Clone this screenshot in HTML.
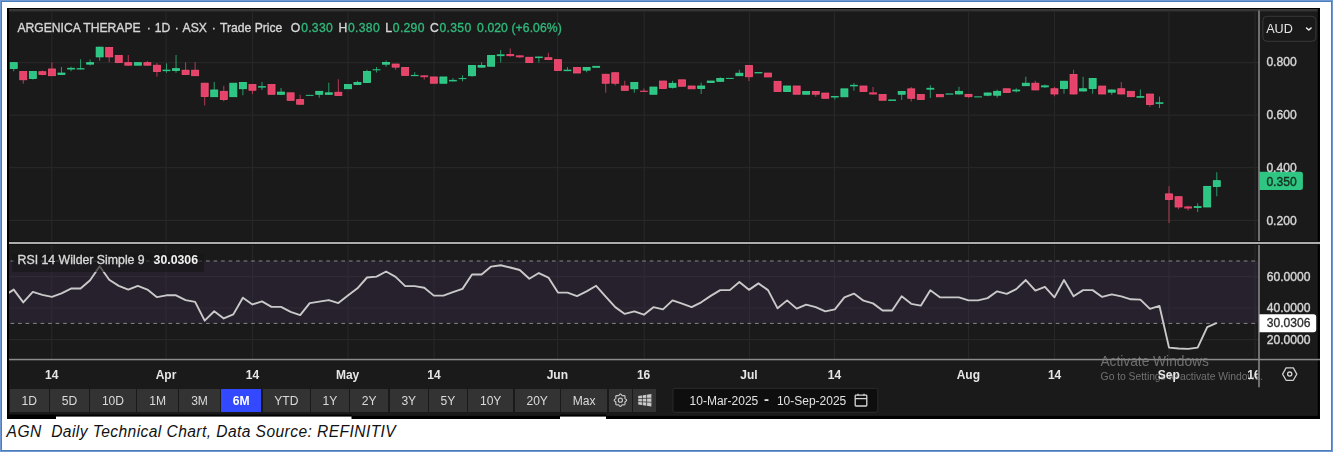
<!DOCTYPE html>
<html lang="en">
<head>
<meta charset="utf-8">
<title>AGN Daily Technical Chart</title>
<style>
html,body{margin:0;padding:0;background:#fff;}
body{width:1333px;height:452px;position:relative;overflow:hidden;font-family:"Liberation Sans",Arial,sans-serif;}
#frame{position:absolute;left:0;top:0;width:1331px;height:450px;border:1px solid #7099d1;box-sizing:content-box;}
#frame2{position:absolute;left:1px;top:1px;width:1329px;height:448px;border:1px solid #4a7ebd;}
#chart{position:absolute;left:7px;top:8px;width:1312.6px;height:410.6px;background:#1a1a1a;overflow:hidden;}
#chart svg{position:absolute;left:-7px;top:-8px;}
.t{position:absolute;white-space:nowrap;line-height:1;}
.hdr{font-size:12.15px;color:#d6d6d6;top:21.8px;-webkit-text-stroke:0.34px #d6d6d6;}
.hdr .g{color:#2fb97b;letter-spacing:0.3px;-webkit-text-stroke:0.34px #2fb97b;}
.ax{font-size:12.1px;font-weight:normal;color:#d6d6d6;-webkit-text-stroke:0.38px #d6d6d6;}
.tl{font-size:12px;font-weight:bold;color:#e6e6e6;top:368.9px;transform:translateX(-50%);}
.btn{position:absolute;top:388.6px;height:23.3px;background:#333333;color:#dadada;font-size:12.1px;line-height:24.9px;text-align:center;}
.btn.on{background:#3349ff;color:#fff;font-weight:bold;}
#cap{position:absolute;left:6.6px;top:423.8px;letter-spacing:0.42px;font-family:"Liberation Sans",sans-serif;font-style:italic;font-size:15.6px;color:#111;white-space:nowrap;line-height:1;transform-origin:0 0;}
</style>
</head>
<body>
<div id="frame"></div><div id="frame2"></div>
<div id="chart">
<svg width="1333" height="452" viewBox="0 0 1333 452">
<defs><linearGradient id="tg" x1="0" y1="0" x2="0" y2="1"><stop offset="0" stop-color="#000"/><stop offset="0.27" stop-color="#000"/><stop offset="0.33" stop-color="#3d3d3d"/><stop offset="0.72" stop-color="#333333"/><stop offset="1" stop-color="#1a1a1a"/></linearGradient></defs>
<g stroke="#272727" stroke-width="1.2" shape-rendering="auto">
<line x1="51.8" y1="10" x2="51.8" y2="359.5"/>
<line x1="166.1" y1="10" x2="166.1" y2="359.5"/>
<line x1="252.6" y1="10" x2="252.6" y2="359.5"/>
<line x1="347.9" y1="10" x2="347.9" y2="359.5"/>
<line x1="434.1" y1="10" x2="434.1" y2="359.5"/>
<line x1="557.6" y1="10" x2="557.6" y2="359.5"/>
<line x1="644.2" y1="10" x2="644.2" y2="359.5"/>
<line x1="749.5" y1="10" x2="749.5" y2="359.5"/>
<line x1="834.4" y1="10" x2="834.4" y2="359.5"/>
<line x1="968.6" y1="10" x2="968.6" y2="359.5"/>
<line x1="1054.5" y1="10" x2="1054.5" y2="359.5"/>
<line x1="1169" y1="10" x2="1169" y2="359.5"/>
<line x1="1255" y1="10" x2="1255" y2="359.5"/>
<line x1="9" y1="62.6" x2="1258.5" y2="62.6"/>
<line x1="9" y1="115.1" x2="1258.5" y2="115.1"/>
<line x1="9" y1="167.6" x2="1258.5" y2="167.6"/>
<line x1="9" y1="220.3" x2="1258.5" y2="220.3"/>
<line x1="9" y1="276.7" x2="1258.5" y2="276.7"/>
<line x1="9" y1="308" x2="1258.5" y2="308"/>
<line x1="9" y1="339.6" x2="1258.5" y2="339.6"/>
</g>
<rect x="9" y="260.8" width="1249.5" height="62.6" fill="#423156" fill-opacity="0.30"/>
<g stroke="#b0b0b0" stroke-width="1" stroke-dasharray="3.7 3.82" stroke-opacity="0.72">
<line x1="10.5" y1="261" x2="1258.5" y2="261"/><line x1="10.5" y1="323.4" x2="1258.5" y2="323.4"/></g>
<g stroke-width="1.05" stroke-opacity="0.72"><line x1="13.72" y1="62.27" x2="13.72" y2="71.15" stroke="#2cc583"/><line x1="23.27" y1="71.15" x2="23.27" y2="83.64" stroke="#e7436a"/><line x1="32.82" y1="71.15" x2="32.82" y2="79.43" stroke="#2cc583"/><line x1="42.36" y1="70.55" x2="42.36" y2="75.36" stroke="#e7436a"/><line x1="51.91" y1="62.27" x2="51.91" y2="76.12" stroke="#e7436a"/><line x1="61.46" y1="67.09" x2="61.46" y2="74.91" stroke="#2cc583"/><line x1="71.01" y1="66.79" x2="71.01" y2="71.3" stroke="#2cc583"/><line x1="80.56" y1="59.26" x2="80.56" y2="69.5" stroke="#2cc583"/><line x1="90.1" y1="59.56" x2="90.1" y2="65.58" stroke="#2cc583"/><line x1="99.65" y1="46.77" x2="99.65" y2="60.77" stroke="#2cc583"/><line x1="109.2" y1="47.07" x2="109.2" y2="62.27" stroke="#e7436a"/><line x1="128.3" y1="55.05" x2="128.3" y2="65.58" stroke="#e7436a"/><line x1="147.39" y1="61.07" x2="147.39" y2="65.58" stroke="#e7436a"/><line x1="156.94" y1="63.02" x2="156.94" y2="76.87" stroke="#e7436a"/><line x1="166.49" y1="63.33" x2="166.49" y2="72.81" stroke="#2cc583"/><line x1="176.04" y1="55.05" x2="176.04" y2="72.81" stroke="#2cc583"/><line x1="185.58" y1="62.27" x2="185.58" y2="74.91" stroke="#e7436a"/><line x1="195.13" y1="62.27" x2="195.13" y2="76.12" stroke="#e7436a"/><line x1="204.68" y1="82.81" x2="204.68" y2="105.38" stroke="#e7436a"/><line x1="214.23" y1="82.05" x2="214.23" y2="97.1" stroke="#2cc583"/><line x1="223.78" y1="85.67" x2="223.78" y2="101.17" stroke="#e7436a"/><line x1="242.87" y1="82.05" x2="242.87" y2="95.15" stroke="#2cc583"/><line x1="252.42" y1="84.16" x2="252.42" y2="93.94" stroke="#e7436a"/><line x1="261.97" y1="82.05" x2="261.97" y2="89.88" stroke="#2cc583"/><line x1="281.06" y1="88.07" x2="281.06" y2="94.7" stroke="#2cc583"/><line x1="300.16" y1="94.85" x2="300.16" y2="104.63" stroke="#e7436a"/><line x1="319.26" y1="90.93" x2="319.26" y2="97.86" stroke="#2cc583"/><line x1="328.8" y1="82.81" x2="328.8" y2="94.7" stroke="#2cc583"/><line x1="338.35" y1="79.35" x2="338.35" y2="95.9" stroke="#e7436a"/><line x1="357.45" y1="80.85" x2="357.45" y2="84.91" stroke="#2cc583"/><line x1="367" y1="69.86" x2="367" y2="82.81" stroke="#2cc583"/><line x1="376.54" y1="67.01" x2="376.54" y2="72.57" stroke="#2cc583"/><line x1="386.09" y1="60.53" x2="386.09" y2="66.85" stroke="#2cc583"/><line x1="395.64" y1="63.63" x2="395.64" y2="69.65" stroke="#e7436a"/><line x1="414.74" y1="72.36" x2="414.74" y2="76.12" stroke="#2cc583"/><line x1="424.28" y1="75.36" x2="424.28" y2="79.43" stroke="#e7436a"/><line x1="452.93" y1="78.07" x2="452.93" y2="81.38" stroke="#2cc583"/><line x1="462.48" y1="75.36" x2="462.48" y2="81.38" stroke="#2cc583"/><line x1="472.02" y1="65.13" x2="472.02" y2="76.87" stroke="#2cc583"/><line x1="481.57" y1="62.27" x2="481.57" y2="67.54" stroke="#2cc583"/><line x1="500.67" y1="50.08" x2="500.67" y2="62.57" stroke="#2cc583"/><line x1="510.22" y1="48.58" x2="510.22" y2="56.85" stroke="#e7436a"/><line x1="519.76" y1="55.35" x2="519.76" y2="58.06" stroke="#e7436a"/><line x1="538.86" y1="56.55" x2="538.86" y2="62.57" stroke="#2cc583"/><line x1="548.41" y1="52.79" x2="548.41" y2="60.02" stroke="#e7436a"/><line x1="567.5" y1="67.09" x2="567.5" y2="71.15" stroke="#2cc583"/><line x1="586.6" y1="67.09" x2="586.6" y2="72.36" stroke="#2cc583"/><line x1="605.7" y1="73.86" x2="605.7" y2="92.67" stroke="#e7436a"/><line x1="615.24" y1="72.36" x2="615.24" y2="85.45" stroke="#e7436a"/><line x1="624.79" y1="80.63" x2="624.79" y2="90.71" stroke="#e7436a"/><line x1="634.34" y1="82.14" x2="634.34" y2="92.67" stroke="#2cc583"/><line x1="643.89" y1="88.46" x2="643.89" y2="91.92" stroke="#e7436a"/><line x1="672.53" y1="80.63" x2="672.53" y2="88.46" stroke="#2cc583"/><line x1="701.18" y1="82.59" x2="701.18" y2="93.88" stroke="#2cc583"/><line x1="720.27" y1="77.32" x2="720.27" y2="81.69" stroke="#2cc583"/><line x1="739.37" y1="69.8" x2="739.37" y2="76.12" stroke="#2cc583"/><line x1="748.92" y1="65.13" x2="748.92" y2="80.93" stroke="#e7436a"/><line x1="815.75" y1="91.17" x2="815.75" y2="96.73" stroke="#e7436a"/><line x1="834.85" y1="95.98" x2="834.85" y2="99.44" stroke="#2cc583"/><line x1="853.94" y1="82.89" x2="853.94" y2="90.87" stroke="#2cc583"/><line x1="873.04" y1="86.95" x2="873.04" y2="94.48" stroke="#e7436a"/><line x1="901.68" y1="91.17" x2="901.68" y2="99.89" stroke="#2cc583"/><line x1="911.23" y1="87.1" x2="911.23" y2="101.4" stroke="#e7436a"/><line x1="930.33" y1="85.15" x2="930.33" y2="97.94" stroke="#2cc583"/><line x1="958.97" y1="86.87" x2="958.97" y2="94.39" stroke="#2cc583"/><line x1="968.52" y1="93.94" x2="968.52" y2="97.86" stroke="#e7436a"/><line x1="987.62" y1="92.59" x2="987.62" y2="96.35" stroke="#2cc583"/><line x1="997.16" y1="89.43" x2="997.16" y2="97.86" stroke="#2cc583"/><line x1="1016.26" y1="88.37" x2="1016.26" y2="92.44" stroke="#2cc583"/><line x1="1025.81" y1="76.64" x2="1025.81" y2="86.12" stroke="#2cc583"/><line x1="1035.36" y1="80.85" x2="1035.36" y2="90.33" stroke="#e7436a"/><line x1="1044.9" y1="84.61" x2="1044.9" y2="87.92" stroke="#2cc583"/><line x1="1054.45" y1="86.87" x2="1054.45" y2="96.35" stroke="#e7436a"/><line x1="1064" y1="80.85" x2="1064" y2="93.64" stroke="#2cc583"/><line x1="1073.55" y1="69.86" x2="1073.55" y2="94.39" stroke="#e7436a"/><line x1="1083.1" y1="76.64" x2="1083.1" y2="91.38" stroke="#2cc583"/><line x1="1092.64" y1="78.14" x2="1092.64" y2="93.64" stroke="#2cc583"/><line x1="1111.74" y1="89.58" x2="1111.74" y2="94.85" stroke="#2cc583"/><line x1="1121.29" y1="82.05" x2="1121.29" y2="94.39" stroke="#e7436a"/><line x1="1140.38" y1="89.46" x2="1140.38" y2="97.75" stroke="#2cc583"/><line x1="1149.93" y1="93.65" x2="1149.93" y2="106.82" stroke="#e7436a"/><line x1="1159.48" y1="96.58" x2="1159.48" y2="108.09" stroke="#2cc583"/><line x1="1169.03" y1="186.33" x2="1169.03" y2="223.01" stroke="#e7436a"/><line x1="1178.58" y1="196.3" x2="1178.58" y2="209.28" stroke="#e7436a"/><line x1="1188.12" y1="205.7" x2="1188.12" y2="210.4" stroke="#e7436a"/><line x1="1197.67" y1="203.26" x2="1197.67" y2="212.1" stroke="#2cc583"/><line x1="1216.77" y1="172.22" x2="1216.77" y2="196.3" stroke="#2cc583"/></g>
<g><rect x="10.22" y="62.67" width="7" height="5.82" fill="#2cc583" stroke="#3ad893" stroke-width="0.8"/><rect x="19.77" y="71.55" width="7" height="8.23" fill="#e7436a" stroke="#f45276" stroke-width="0.8"/><rect x="29.32" y="71.55" width="7" height="6.87" fill="#2cc583" stroke="#3ad893" stroke-width="0.8"/><rect x="38.86" y="71.7" width="7" height="2.81" fill="#e7436a" stroke="#f45276" stroke-width="0.8"/><rect x="48.41" y="68.99" width="7" height="6.72" fill="#e7436a" stroke="#f45276" stroke-width="0.8"/><rect x="57.96" y="73.06" width="7" height="1.46" fill="#2cc583" stroke="#3ad893" stroke-width="0.8"/><rect x="67.11" y="67.84" width="7.8" height="1.66" fill="#2cc583"/><rect x="76.66" y="68.14" width="7.8" height="1.35" fill="#2cc583"/><rect x="86.6" y="62.67" width="7" height="1.46" fill="#2cc583" stroke="#3ad893" stroke-width="0.8"/><rect x="96.15" y="47.17" width="7" height="9.73" fill="#2cc583" stroke="#3ad893" stroke-width="0.8"/><rect x="105.7" y="47.47" width="7" height="9.43" fill="#e7436a" stroke="#f45276" stroke-width="0.8"/><rect x="115.25" y="55.45" width="7" height="7.18" fill="#e7436a" stroke="#f45276" stroke-width="0.8"/><rect x="124.8" y="62.67" width="7" height="2.51" fill="#e7436a" stroke="#f45276" stroke-width="0.8"/><rect x="134.34" y="62.67" width="7" height="2.51" fill="#2cc583" stroke="#3ad893" stroke-width="0.8"/><rect x="143.89" y="62.67" width="7" height="2.51" fill="#e7436a" stroke="#f45276" stroke-width="0.8"/><rect x="153.44" y="65.23" width="7" height="6.27" fill="#e7436a" stroke="#f45276" stroke-width="0.8"/><rect x="162.59" y="69.65" width="7.8" height="1.5" fill="#2cc583"/><rect x="172.54" y="68.69" width="7" height="1.76" fill="#2cc583" stroke="#3ad893" stroke-width="0.8"/><rect x="182.08" y="70.2" width="7" height="4.32" fill="#e7436a" stroke="#f45276" stroke-width="0.8"/><rect x="191.63" y="70.2" width="7" height="5.52" fill="#e7436a" stroke="#f45276" stroke-width="0.8"/><rect x="201.18" y="83.21" width="7" height="13.35" fill="#e7436a" stroke="#f45276" stroke-width="0.8"/><rect x="210.73" y="89.98" width="7" height="6.72" fill="#2cc583" stroke="#3ad893" stroke-width="0.8"/><rect x="220.28" y="91.33" width="7" height="8.23" fill="#e7436a" stroke="#f45276" stroke-width="0.8"/><rect x="229.82" y="83.21" width="7" height="13.5" fill="#2cc583" stroke="#3ad893" stroke-width="0.8"/><rect x="239.37" y="82.45" width="7" height="6.27" fill="#2cc583" stroke="#3ad893" stroke-width="0.8"/><rect x="248.92" y="84.56" width="7" height="5.67" fill="#e7436a" stroke="#f45276" stroke-width="0.8"/><rect x="258.07" y="86.12" width="7.8" height="1.5" fill="#2cc583"/><rect x="268.02" y="84.56" width="7" height="9.73" fill="#e7436a" stroke="#f45276" stroke-width="0.8"/><rect x="277.56" y="92.09" width="7" height="2.21" fill="#2cc583" stroke="#3ad893" stroke-width="0.8"/><rect x="287.11" y="92.84" width="7" height="7.48" fill="#e7436a" stroke="#f45276" stroke-width="0.8"/><rect x="296.66" y="99.61" width="7" height="4.62" fill="#e7436a" stroke="#f45276" stroke-width="0.8"/><rect x="305.81" y="94.85" width="7.8" height="1" fill="#2cc583"/><rect x="315.76" y="91.33" width="7" height="2.96" fill="#2cc583" stroke="#3ad893" stroke-width="0.8"/><rect x="325.3" y="92.84" width="7" height="1.46" fill="#2cc583" stroke="#3ad893" stroke-width="0.8"/><rect x="334.85" y="92.24" width="7" height="3.26" fill="#e7436a" stroke="#f45276" stroke-width="0.8"/><rect x="344.4" y="84.56" width="7" height="4.17" fill="#2cc583" stroke="#3ad893" stroke-width="0.8"/><rect x="353.95" y="82.45" width="7" height="2.06" fill="#2cc583" stroke="#3ad893" stroke-width="0.8"/><rect x="363.5" y="71.47" width="7" height="10.94" fill="#2cc583" stroke="#3ad893" stroke-width="0.8"/><rect x="372.64" y="69.26" width="7.8" height="1.05" fill="#2cc583"/><rect x="382.59" y="62.44" width="7" height="1.76" fill="#2cc583" stroke="#3ad893" stroke-width="0.8"/><rect x="392.14" y="64.03" width="7" height="3.11" fill="#e7436a" stroke="#f45276" stroke-width="0.8"/><rect x="401.69" y="67.49" width="7" height="7.93" fill="#e7436a" stroke="#f45276" stroke-width="0.8"/><rect x="410.84" y="74.91" width="7.8" height="1.2" fill="#2cc583"/><rect x="420.38" y="75.36" width="7.8" height="1.81" fill="#e7436a"/><rect x="430.33" y="76.97" width="7" height="6.27" fill="#e7436a" stroke="#f45276" stroke-width="0.8"/><rect x="439.88" y="76.97" width="7" height="6.27" fill="#2cc583" stroke="#3ad893" stroke-width="0.8"/><rect x="449.03" y="79.88" width="7.8" height="1.5" fill="#2cc583"/><rect x="458.58" y="78.07" width="7.8" height="1.05" fill="#2cc583"/><rect x="468.52" y="65.53" width="7" height="10.19" fill="#2cc583" stroke="#3ad893" stroke-width="0.8"/><rect x="478.07" y="65.53" width="7" height="1.61" fill="#2cc583" stroke="#3ad893" stroke-width="0.8"/><rect x="487.62" y="55.45" width="7" height="10.79" fill="#2cc583" stroke="#3ad893" stroke-width="0.8"/><rect x="496.77" y="54.3" width="7.8" height="1.81" fill="#2cc583"/><rect x="506.32" y="54" width="7.8" height="2.11" fill="#e7436a"/><rect x="515.86" y="55.35" width="7.8" height="1.96" fill="#e7436a"/><rect x="525.81" y="57.25" width="7" height="5.37" fill="#e7436a" stroke="#f45276" stroke-width="0.8"/><rect x="534.96" y="56.55" width="7.8" height="1.5" fill="#2cc583"/><rect x="544.91" y="57.71" width="7" height="1.91" fill="#e7436a" stroke="#f45276" stroke-width="0.8"/><rect x="554.46" y="59.66" width="7" height="10.79" fill="#e7436a" stroke="#f45276" stroke-width="0.8"/><rect x="563.6" y="69.65" width="7.8" height="1.5" fill="#2cc583"/><rect x="573.55" y="67.49" width="7" height="5.52" fill="#e7436a" stroke="#f45276" stroke-width="0.8"/><rect x="583.1" y="67.49" width="7" height="2.66" fill="#2cc583" stroke="#3ad893" stroke-width="0.8"/><rect x="592.25" y="65.88" width="7.8" height="1.96" fill="#2cc583"/><rect x="602.2" y="74.26" width="7" height="8.98" fill="#e7436a" stroke="#f45276" stroke-width="0.8"/><rect x="611.74" y="72.76" width="7" height="10.49" fill="#e7436a" stroke="#f45276" stroke-width="0.8"/><rect x="621.29" y="86" width="7" height="4.32" fill="#e7436a" stroke="#f45276" stroke-width="0.8"/><rect x="630.84" y="82.54" width="7" height="6.27" fill="#2cc583" stroke="#3ad893" stroke-width="0.8"/><rect x="639.99" y="90.71" width="7.8" height="1.2" fill="#e7436a"/><rect x="649.94" y="87.05" width="7" height="7.18" fill="#2cc583" stroke="#3ad893" stroke-width="0.8"/><rect x="659.48" y="81.03" width="7" height="7.48" fill="#e7436a" stroke="#f45276" stroke-width="0.8"/><rect x="669.03" y="83.29" width="7" height="4.02" fill="#2cc583" stroke="#3ad893" stroke-width="0.8"/><rect x="678.58" y="79.83" width="7" height="6.42" fill="#e7436a" stroke="#f45276" stroke-width="0.8"/><rect x="688.13" y="86" width="7" height="2.81" fill="#e7436a" stroke="#f45276" stroke-width="0.8"/><rect x="697.68" y="86" width="7" height="2.51" fill="#2cc583" stroke="#3ad893" stroke-width="0.8"/><rect x="707.22" y="81.03" width="7" height="1.46" fill="#2cc583" stroke="#3ad893" stroke-width="0.8"/><rect x="716.77" y="78.47" width="7" height="2.81" fill="#2cc583" stroke="#3ad893" stroke-width="0.8"/><rect x="725.92" y="77.92" width="7.8" height="1" fill="#2cc583"/><rect x="735.87" y="73.21" width="7" height="2.51" fill="#2cc583" stroke="#3ad893" stroke-width="0.8"/><rect x="745.42" y="65.53" width="7" height="11.24" fill="#e7436a" stroke="#f45276" stroke-width="0.8"/><rect x="754.56" y="72.05" width="7.8" height="1.35" fill="#2cc583"/><rect x="764.51" y="73.06" width="7" height="3.87" fill="#e7436a" stroke="#f45276" stroke-width="0.8"/><rect x="774.06" y="81.33" width="7" height="10.19" fill="#e7436a" stroke="#f45276" stroke-width="0.8"/><rect x="783.61" y="86" width="7" height="5.52" fill="#2cc583" stroke="#3ad893" stroke-width="0.8"/><rect x="793.16" y="86" width="7" height="8.23" fill="#e7436a" stroke="#f45276" stroke-width="0.8"/><rect x="802.7" y="91.57" width="7" height="2.66" fill="#2cc583" stroke="#3ad893" stroke-width="0.8"/><rect x="812.25" y="91.57" width="7" height="2.66" fill="#e7436a" stroke="#f45276" stroke-width="0.8"/><rect x="821.8" y="93.07" width="7" height="5.22" fill="#e7436a" stroke="#f45276" stroke-width="0.8"/><rect x="830.95" y="95.98" width="7.8" height="1.5" fill="#2cc583"/><rect x="840.9" y="88.86" width="7" height="7.93" fill="#2cc583" stroke="#3ad893" stroke-width="0.8"/><rect x="850.04" y="84.85" width="7.8" height="1.5" fill="#2cc583"/><rect x="859.99" y="86" width="7" height="5.52" fill="#e7436a" stroke="#f45276" stroke-width="0.8"/><rect x="869.14" y="92.37" width="7.8" height="2.11" fill="#e7436a"/><rect x="879.09" y="94.58" width="7" height="5.67" fill="#e7436a" stroke="#f45276" stroke-width="0.8"/><rect x="888.24" y="99.44" width="7.8" height="1.5" fill="#2cc583"/><rect x="898.18" y="91.57" width="7" height="2.66" fill="#2cc583" stroke="#3ad893" stroke-width="0.8"/><rect x="907.73" y="88.86" width="7" height="9.43" fill="#e7436a" stroke="#f45276" stroke-width="0.8"/><rect x="917.28" y="94.58" width="7" height="4.92" fill="#e7436a" stroke="#f45276" stroke-width="0.8"/><rect x="926.43" y="87.86" width="7.8" height="1.81" fill="#2cc583"/><rect x="936.38" y="94.58" width="7" height="2.21" fill="#e7436a" stroke="#f45276" stroke-width="0.8"/><rect x="945.52" y="93.42" width="7.8" height="1.2" fill="#2cc583"/><rect x="955.47" y="91.33" width="7" height="2.66" fill="#2cc583" stroke="#3ad893" stroke-width="0.8"/><rect x="965.02" y="94.34" width="7" height="2.36" fill="#e7436a" stroke="#f45276" stroke-width="0.8"/><rect x="974.17" y="96.35" width="7.8" height="1.05" fill="#2cc583"/><rect x="984.12" y="92.99" width="7" height="2.21" fill="#2cc583" stroke="#3ad893" stroke-width="0.8"/><rect x="993.66" y="91.33" width="7" height="3.87" fill="#2cc583" stroke="#3ad893" stroke-width="0.8"/><rect x="1003.21" y="88.77" width="7" height="3.71" fill="#e7436a" stroke="#f45276" stroke-width="0.8"/><rect x="1012.36" y="89.58" width="7.8" height="1.81" fill="#2cc583"/><rect x="1022.31" y="83.21" width="7" height="2.51" fill="#2cc583" stroke="#3ad893" stroke-width="0.8"/><rect x="1031.86" y="83.21" width="7" height="6.72" fill="#e7436a" stroke="#f45276" stroke-width="0.8"/><rect x="1041" y="85.36" width="7.8" height="1.96" fill="#2cc583"/><rect x="1050.95" y="88.77" width="7" height="5.22" fill="#e7436a" stroke="#f45276" stroke-width="0.8"/><rect x="1060.5" y="81.25" width="7" height="7.18" fill="#2cc583" stroke="#3ad893" stroke-width="0.8"/><rect x="1070.05" y="74.48" width="7" height="19.52" fill="#e7436a" stroke="#f45276" stroke-width="0.8"/><rect x="1079.6" y="88.77" width="7" height="2.21" fill="#2cc583" stroke="#3ad893" stroke-width="0.8"/><rect x="1089.14" y="78.54" width="7" height="9.88" fill="#2cc583" stroke="#3ad893" stroke-width="0.8"/><rect x="1098.69" y="86.07" width="7" height="7.93" fill="#e7436a" stroke="#f45276" stroke-width="0.8"/><rect x="1108.24" y="89.98" width="7" height="2.21" fill="#2cc583" stroke="#3ad893" stroke-width="0.8"/><rect x="1117.79" y="88.77" width="7" height="5.22" fill="#e7436a" stroke="#f45276" stroke-width="0.8"/><rect x="1127.34" y="91.33" width="7" height="5.37" fill="#e7436a" stroke="#f45276" stroke-width="0.8"/><rect x="1136.48" y="96.09" width="7.8" height="1.66" fill="#2cc583"/><rect x="1146.43" y="94.05" width="7" height="10.42" fill="#e7436a" stroke="#f45276" stroke-width="0.8"/><rect x="1155.58" y="102.24" width="7.8" height="1.66" fill="#2cc583"/><rect x="1165.53" y="193.88" width="7" height="5.59" fill="#e7436a" stroke="#f45276" stroke-width="0.8"/><rect x="1175.08" y="196.7" width="7" height="10.3" fill="#e7436a" stroke="#f45276" stroke-width="0.8"/><rect x="1184.22" y="206.45" width="7.8" height="2.07" fill="#e7436a"/><rect x="1193.77" y="206.08" width="7.8" height="1.88" fill="#2cc583"/><rect x="1203.72" y="186.35" width="7" height="20.64" fill="#2cc583" stroke="#3ad893" stroke-width="0.8"/><rect x="1213.27" y="180.71" width="7" height="5.78" fill="#2cc583" stroke="#3ad893" stroke-width="0.8"/></g>
<polyline points="8.6,292.91 13.72,289.6 23.27,302.39 32.82,291.86 42.36,294.87 51.91,296.83 61.46,293.36 71.01,288.55 80.56,288.55 90.1,280.27 99.65,266.28 109.2,279.82 118.75,285.84 128.3,289.6 137.84,285.84 147.39,289.6 156.94,297.13 166.49,295.32 176.04,295.32 185.58,300.14 195.13,301.94 204.68,320.69 214.23,311.21 223.78,318.43 233.32,314.37 242.87,297.67 252.42,304.44 261.97,301.43 271.52,306.85 281.06,306.85 290.61,311.96 300.16,315.12 309.71,303.08 319.26,301.58 328.8,300.07 338.35,303.08 347.9,295.41 357.45,288.34 367,277.5 376.54,276.6 386.09,271.48 395.64,276.81 405.19,286.14 414.74,286.14 424.28,287.8 433.83,295.62 443.38,295.62 452.93,292.16 462.48,288.85 472.02,274.55 481.57,274.55 491.12,266.58 500.67,265.22 510.22,267.48 519.76,270.04 529.31,278.77 538.86,273.05 548.41,277.56 557.96,292.61 567.5,292.61 577.05,296.07 586.6,291.35 596.15,285.78 605.7,296.61 615.24,307.15 624.79,313.92 634.34,311.36 643.89,314.67 653.44,307.15 662.98,309.4 672.53,300.37 682.08,303.69 691.63,307.15 701.18,302.33 710.72,295.86 720.27,290.14 729.82,290.14 739.37,282.02 748.92,289.84 758.46,283.37 768.01,290.14 777.56,308.35 787.11,300.37 796.66,308.65 806.2,304.59 815.75,307.15 825.3,311.36 834.85,309.4 844.4,297.36 853.94,293.6 863.49,300.68 873.04,303.38 882.59,310.46 892.14,310.46 901.68,296.31 911.23,303.84 920.78,305.64 930.33,290.29 939.88,297.36 949.42,297.36 958.97,297.36 968.52,300.37 978.07,300.37 987.62,298.12 997.16,291.35 1006.71,293.9 1016.26,289.09 1025.81,280.06 1035.36,290.59 1044.9,286.83 1054.45,297.36 1064,280.06 1073.55,296.31 1083.1,290.14 1092.64,290.14 1102.19,296.91 1111.74,294.36 1121.29,296.31 1130.84,299.32 1140.38,299.61 1149.93,308.9 1159.48,305.96 1169.03,347.64 1178.58,348.57 1188.12,348.88 1197.67,347.64 1207.22,327.19 1216.77,322.85" fill="none" stroke="#c9c9c9" stroke-width="1.9" stroke-linejoin="round" stroke-linecap="butt"/>
<!-- RSI label background -->
<rect x="12.3" y="253.6" width="191.7" height="18.4" fill="#161616" fill-opacity="0.62"/>
<!-- frame edges -->
<rect x="7" y="8" width="1313" height="4" fill="url(#tg)"/>
<rect x="7" y="8" width="2" height="411" fill="#000"/>
<rect x="1317.8" y="8" width="2" height="411" fill="#000"/>
<rect x="7" y="415.9" width="1313" height="3" fill="#000"/><rect x="7" y="414.5" width="49" height="4" fill="#000"/><rect x="56" y="414.5" width="295.5" height="2.1" fill="#000"/><rect x="56" y="416.6" width="295.5" height="3" fill="#fff"/><rect x="560" y="414.5" width="46" height="2.1" fill="#000"/><rect x="560" y="416.6" width="46" height="3" fill="#fff"/>
<!-- pane separator, axes -->
<rect x="1258" y="10.5" width="2" height="376.8" fill="#6f6f6f"/>
<rect x="9" y="241" width="1311" height="4" fill="#121212"/><rect x="9" y="242" width="1311" height="2" fill="#adadad"/>
<rect x="9" y="358.8" width="1311" height="1.5" fill="#8c8c8c"/>
<!-- price tag -->
<path d="M1259.4 171.8H1300.4a2.5 2.5 0 0 1 2.5 2.5V187.6a2.5 2.5 0 0 1-2.5 2.5H1259.4Z" fill="#2fc683"/>
<path d="M1259.4 314.2H1313.6a2.6 2.6 0 0 1 2.6 2.6V329.6a2.6 2.6 0 0 1-2.6 2.6H1259.4Z" fill="#ffffff"/>
<!-- AUD box -->
<rect x="1262.9" y="16.3" width="53" height="25" rx="4" ry="4" fill="#191919" stroke="#383838" stroke-width="1"/>
<path d="M1306.5 27.9L1308.8 30.1L1311.1 27.9" fill="none" stroke="#f0f0f0" stroke-width="1.45" stroke-linecap="round" stroke-linejoin="round"/>
<!-- hex settings icon -->
<path d="M1282.6 374.1L1286.1 367.9H1293.3L1296.8 374.1L1293.3 380.3H1286.1Z" fill="none" stroke="#cdcdcd" stroke-width="1.3" stroke-linejoin="round"/>
<circle cx="1289.7" cy="374.1" r="2.1" fill="none" stroke="#d4d4d4" stroke-width="1.3"/>
<!-- date box -->
<rect x="672.9" y="388.3" width="204.9" height="24" rx="2" ry="2" fill="#0e0e0e" stroke="#2c2c2c" stroke-width="1"/>
<!-- calendar icon -->
<g fill="none" stroke="#d6d6d6" stroke-width="1.3" stroke-linejoin="round"><rect x="855.2" y="395.2" width="11.6" height="10.8" rx="0.8"/><line x1="855.2" y1="398.6" x2="866.8" y2="398.6"/><line x1="858" y1="393.8" x2="858" y2="395.6"/><line x1="864" y1="393.8" x2="864" y2="395.6"/></g>
</svg>

<div id="ov" style="position:absolute;left:0;top:-8px;width:1313px;height:420px;will-change:transform">
<!-- header -->
<span class="t hdr" style="left:10.4px">ARGENICA THERAPE</span>
<span class="t hdr" style="left:139.8px">·</span>
<span class="t hdr" style="left:147.7px">1D</span>
<span class="t hdr" style="left:167.7px">·</span>
<span class="t hdr" style="left:175.6px">ASX</span>
<span class="t hdr" style="left:204.7px">·</span>
<span class="t hdr" style="left:213px">Trade Price</span>
<span class="t hdr" style="left:283.8px">O<span class="g" style="margin-left:0.9px">0.330</span></span>
<span class="t hdr" style="left:331.4px">H<span class="g" style="margin-left:0.9px">0.380</span></span>
<span class="t hdr" style="left:378.2px">L<span class="g" style="margin-left:0.9px">0.290</span></span>
<span class="t hdr" style="left:422.9px">C<span class="g" style="margin-left:0.9px">0.350</span></span>
<span class="t hdr" style="left:470.1px"><span class="g" style="letter-spacing:0.1px">0.020 (+6.06%)</span></span>

<!-- RSI label -->
<span class="t" style="left:10.6px;top:253.9px;font-size:12.3px;color:#d8d8d8;-webkit-text-stroke:0.34px #d8d8d8">RSI 14 Wilder Simple 9</span>
<span class="t" style="left:146.6px;top:253.9px;font-size:12.3px;color:#f2f2f2;font-weight:bold">30.0306</span>

<!-- right axis labels -->
<span class="t" style="left:1259.2px;top:22.65px;font-size:12.6px;color:#e4e4e4">AUD</span>
<span class="t ax" style="left:1259.4px;top:56.4px">0.800</span>
<span class="t ax" style="left:1259.4px;top:108.6px">0.600</span>
<span class="t ax" style="left:1259.4px;top:162px">0.400</span>
<span class="t ax" style="left:1259.4px;top:215.1px">0.200</span>
<span class="t ax" style="left:1259.4px;top:175.5px;color:#14301f;-webkit-text-stroke:0.38px #14301f">0.350</span>
<span class="t ax" style="left:1259.8px;top:271.3px">60.0000</span>
<span class="t ax" style="left:1259.8px;top:302.1px">40.0000</span>
<span class="t ax" style="left:1259.8px;top:333.6px">20.0000</span>
<span class="t ax" style="left:1259.8px;top:317.3px;color:#2a2a2a;-webkit-text-stroke:0.3px #2a2a2a">30.0306</span>

<!-- watermark -->
<span class="t" style="left:1093.4px;top:354.7px;font-size:13.75px;color:#858585;opacity:.8">Activate Windows</span>
<span class="t" style="left:1093.6px;top:371.6px;font-size:10.4px;color:#858585;opacity:.8;letter-spacing:-0.05px">Go to Settings to activate Windows.</span>

<!-- time labels -->
<span class="t tl" style="left:44.7px">14</span>
<span class="t tl" style="left:159px">Apr</span>
<span class="t tl" style="left:245.4px">14</span>
<span class="t tl" style="left:340.6px">May</span>
<span class="t tl" style="left:426.9px">14</span>
<span class="t tl" style="left:550.3px">Jun</span>
<span class="t tl" style="left:636.6px">16</span>
<span class="t tl" style="left:742px">Jul</span>
<span class="t tl" style="left:827.4px">14</span>
<span class="t tl" style="left:961.3px">Aug</span>
<span class="t tl" style="left:1047.6px">14</span>
<span class="t tl" style="left:1161.8px">Sep</span>
<span class="t tl" style="left:1247px;clip-path:inset(0 3.2px 0 0)">16</span>

<!-- buttons -->
<div class="btn" style="left:2.6px;width:39.4px">1D</div>
<div class="btn" style="left:43.1px;width:38.9px">5D</div>
<div class="btn" style="left:83.2px;width:45.6px">10D</div>
<div class="btn" style="left:130.3px;width:40.6px">1M</div>
<div class="btn" style="left:172px;width:41.1px">3M</div>
<div class="btn on" style="left:213.8px;width:40.7px">6M</div>
<div class="btn" style="left:255.7px;width:47.2px">YTD</div>
<div class="btn" style="left:304.2px;width:37.6px">1Y</div>
<div class="btn" style="left:343.2px;width:38px">2Y</div>
<div class="btn" style="left:382.8px;width:38px">3Y</div>
<div class="btn" style="left:422.2px;width:37.6px">5Y</div>
<div class="btn" style="left:461.2px;width:45px">10Y</div>
<div class="btn" style="left:507.6px;width:45.2px">20Y</div>
<div class="btn" style="left:554.4px;width:45.4px">Max</div>
<div class="btn" style="left:601.8px;width:23px"></div>
<div class="btn" style="left:626.4px;width:22.8px"></div>
<svg width="60" height="30" viewBox="600 385 60 30" style="position:absolute;left:593px;top:385px">
<!-- gear -->
<g fill="none" stroke="#c9c9c9" stroke-width="1.15" stroke-linejoin="round">
<path d="M626.57 400.20L626.47 400.60L626.21 400.96L625.84 401.28L625.46 401.56L625.15 401.81L624.95 402.09L624.90 402.42L624.94 402.82L625.01 403.28L625.05 403.77L624.98 404.21L624.76 404.56L624.41 404.78L623.97 404.85L623.48 404.81L623.02 404.74L622.62 404.70L622.29 404.75L622.01 404.95L621.76 405.26L621.48 405.64L621.16 406.01L620.80 406.27L620.40 406.37L620.00 406.27L619.64 406.01L619.32 405.64L619.04 405.26L618.79 404.95L618.51 404.75L618.18 404.70L617.78 404.74L617.32 404.81L616.83 404.85L616.39 404.78L616.04 404.56L615.82 404.21L615.75 403.77L615.79 403.28L615.86 402.82L615.90 402.42L615.85 402.09L615.65 401.81L615.34 401.56L614.96 401.28L614.59 400.96L614.33 400.60L614.23 400.20L614.33 399.80L614.59 399.44L614.96 399.12L615.34 398.84L615.65 398.59L615.85 398.31L615.90 397.98L615.86 397.58L615.79 397.12L615.75 396.63L615.82 396.19L616.04 395.84L616.39 395.62L616.83 395.55L617.32 395.59L617.78 395.66L618.18 395.70L618.51 395.65L618.79 395.45L619.04 395.14L619.32 394.76L619.64 394.39L620.00 394.13L620.40 394.03L620.80 394.13L621.16 394.39L621.48 394.76L621.76 395.14L622.01 395.45L622.29 395.65L622.62 395.70L623.02 395.66L623.48 395.59L623.97 395.55L624.41 395.62L624.76 395.84L624.98 396.19L625.05 396.63L625.01 397.12L624.94 397.58L624.90 397.98L624.95 398.31L625.15 398.59L625.46 398.84L625.84 399.12L626.21 399.44L626.47 399.80Z"/>
<circle cx="620.4" cy="400.2" r="2.05"/>
</g>
<!-- table icon -->
<g fill="#c9c9c9">
<path d="M638.2 395.9L651.4 393.9V406.6L638.2 404.4Z"/>
</g>
<g stroke="#333333" stroke-width="0.75" fill="none">
<line x1="638" y1="398.7" x2="651.6" y2="398.1"/><line x1="638" y1="401.6" x2="651.6" y2="402.3"/>
<line x1="642.4" y1="393" x2="642.4" y2="407"/><line x1="646.6" y1="393" x2="646.6" y2="407"/>
</g>
</svg>
<span class="t" style="left:682.6px;top:395.0px;font-size:12px;color:#e2e2e2">10-Mar-2025</span>
<span class="t" style="left:757px;top:390.8px;font-size:15px;color:#e2e2e2;font-weight:bold">-</span>
<span class="t" style="left:769.9px;top:395.0px;font-size:12px;color:#e2e2e2">10-Sep-2025</span>
</div>
</div>
<div id="cap">AGN&nbsp; Daily Technical Chart, Data Source: REFINITIV</div>
</body>
</html>
